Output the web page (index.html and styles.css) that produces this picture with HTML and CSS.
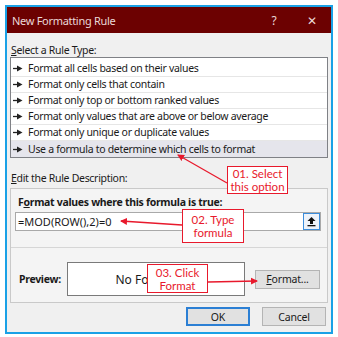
FILE: index.html
```html
<!DOCTYPE html>
<html>
<head>
<meta charset="utf-8">
<link rel="stylesheet" href="styles.css">
</head>
<body>
<div class="window">
  <div class="titlebar">
    <span class="title">New Formatting Rule</span>
    <span class="tb-help">?</span>
    <span class="tb-close">✕</span>
  </div>
  <div class="content">
    <div class="label"><u>S</u>elect a Rule Type:</div>
    <ul class="list">
      <li><svg class="arr" width="10" height="7" viewBox="0 0 10 7"><path d="M0 3.5H5" stroke="#222" stroke-width="1.3"/><path d="M4 0.5L9.5 3.5L4 6.5Z" fill="#222"/></svg>Format all cells based on their values</li>
      <li><svg class="arr" width="10" height="7" viewBox="0 0 10 7"><path d="M0 3.5H5" stroke="#222" stroke-width="1.3"/><path d="M4 0.5L9.5 3.5L4 6.5Z" fill="#222"/></svg>Format only cells that contain</li>
      <li><svg class="arr" width="10" height="7" viewBox="0 0 10 7"><path d="M0 3.5H5" stroke="#222" stroke-width="1.3"/><path d="M4 0.5L9.5 3.5L4 6.5Z" fill="#222"/></svg>Format only top or bottom ranked values</li>
      <li><svg class="arr" width="10" height="7" viewBox="0 0 10 7"><path d="M0 3.5H5" stroke="#222" stroke-width="1.3"/><path d="M4 0.5L9.5 3.5L4 6.5Z" fill="#222"/></svg>Format only values that are above or below average</li>
      <li><svg class="arr" width="10" height="7" viewBox="0 0 10 7"><path d="M0 3.5H5" stroke="#222" stroke-width="1.3"/><path d="M4 0.5L9.5 3.5L4 6.5Z" fill="#222"/></svg>Format only unique or duplicate values</li>
      <li class="selected"><svg class="arr" width="10" height="7" viewBox="0 0 10 7"><path d="M0 3.5H5" stroke="#222" stroke-width="1.3"/><path d="M4 0.5L9.5 3.5L4 6.5Z" fill="#222"/></svg>Use a formula to determine which cells to format</li>
    </ul>
    <div class="label label2"><u>E</u>dit the Rule Description:</div>
    <div class="group">
      <div class="bold-label">F<u>o</u>rmat values where this formula is true:</div>
      <div class="input">
        <span class="formula">=MOD(ROW(),2)=0</span>
        <span class="collapse"><svg width="11" height="11" viewBox="0 0 11 11"><path d="M5.5 1L1.5 5H4V8H7V5H9.5Z" fill="#111"/><rect x="1.5" y="9" width="8" height="1.3" fill="#111"/></svg></span>
      </div>
      <div class="sep"></div>
      <div class="preview-row">
        <span class="bold-label prev-label">Preview:</span>
        <div class="preview">No Format Set</div>
        <button class="btn format-btn"><u>F</u>ormat...</button>
      </div>
    </div>
    <div class="buttons">
      <button class="btn ok">OK</button>
      <button class="btn">Cancel</button>
    </div>
  </div>

  <svg class="arrows" width="328" height="329" viewBox="5 5 328 329">
    <defs>
      <marker id="ah" markerWidth="8" markerHeight="8" refX="6" refY="4" orient="auto" markerUnits="userSpaceOnUse">
        <path d="M0 0.5L7 4L0 7.5Z" fill="#e8192c"/>
      </marker>
    </defs>
    <line x1="227" y1="183" x2="178" y2="155" stroke="#e8192c" stroke-width="1.3" marker-end="url(#ah)"/>
    <line x1="182" y1="225" x2="121" y2="221" stroke="#e8192c" stroke-width="1.3" marker-end="url(#ah)"/>
    <line x1="208" y1="282" x2="257" y2="281" stroke="#e8192c" stroke-width="1.3" marker-end="url(#ah)"/>
  </svg>
  <div class="callout c1">01. Select<br>this option</div>
  <div class="callout c2">02. Type<br>formula</div>
  <div class="callout c3">03. Click<br>Format</div>
</div>
</body>
</html>
```
FILE: styles.css
```css
* { box-sizing: border-box; }
body {
  margin: 0;
  background: #ffffff;
  font-family: "Noto Sans", "Open Sans", sans-serif;
  font-size: 10.5px;
  letter-spacing: -0.3px;
  color: #1a1a1a;
}
.window {
  position: relative;
  margin: 5px 0 0 5px;
  width: 328px;
  height: 329px;
  border: 2px solid #1aa1e6;
  background: #f0f0f0;
  display: flex;
  flex-direction: column;
}
.titlebar {
  height: 26px;
  background: #6c0101;
  color: #ead8d8;
  display: flex;
  align-items: center;
  padding-left: 5px;
  font-size: 11px;
}
.title { flex: 1; }
.tb-help { width: 38px; text-align: center; font-size: 12px; }
.tb-close { width: 38px; text-align: center; font-size: 12px; }
.content {
  flex: 1;
  padding: 10px 3px 0 3px;
  display: flex;
  flex-direction: column;
}
.label {
  padding-left: 1px;
  line-height: 14px;
  height: 14px;
}
.label u, .bold-label u, .btn u { text-decoration: underline; }
.list {
  list-style: none;
  margin: 0;
  padding: 3px 0 0 0;
  border: 1px solid #7f8186;
  background: #ffffff;
  height: 101px;
}
.list li {
  height: 16px;
  line-height: 15px;
  border-bottom: 1px solid #e6e6e6;
  padding-left: 2px;
  display: flex;
  align-items: center;
  white-space: nowrap;
}
.list li.selected { background: #e5e5ec; border-bottom: none; }
.arr { margin-right: 5px; flex: none; }
.label2 { margin-top: 13px; }
.group {
  margin-top: 3px;
  border: 1px solid #c9c9c9;
  background: #f4f4f4;
  height: 115px;
  padding: 6px 6px 0 4px;
  display: flex;
  flex-direction: column;
}
.bold-label {
  font-weight: bold;
  line-height: 14px;
  padding-left: 3px;
}
.input {
  margin-top: 3px;
  height: 19px;
  border: 1px solid #a9a9a9;
  background: #ffffff;
  display: flex;
  align-items: center;
  justify-content: space-between;
  padding: 0 0 0 2px;
}
.formula { font-size: 11px; letter-spacing: 0; }
.collapse {
  width: 17px;
  height: 17px;
  border: 1px solid #3c8ddb;
  background: #eef3fa;
  display: flex;
  align-items: center;
  justify-content: center;
}
.sep {
  margin: 16px -6px 0 -4px;
  border-top: 1px solid #d6d6d6;
}
.preview-row {
  display: flex;
  align-items: center;
  margin-top: 14px;
}
.prev-label { width: 52px; padding-left: 4px; }
.preview {
  width: 178px;
  height: 34px;
  border: 1px solid #7a7a7a;
  background: #ffffff;
  display: flex;
  align-items: center;
  justify-content: center;
  font-size: 12px;
  letter-spacing: 0;
}
.btn {
  font-family: inherit;
  font-size: 10.5px;
  letter-spacing: -0.2px;
  color: #1a1a1a;
  height: 19px;
  width: 64px;
  border: 1px solid #b4b4b4;
  background: #e1e1e1;
  padding: 0;
}
.format-btn { margin-left: 10px; width: 65px; }
.buttons {
  display: flex;
  justify-content: flex-end;
  gap: 12px;
  padding: 4px 2px 0 0;
}
.btn.ok { border: 2px solid #2b7fd4; }
.arrows {
  position: absolute;
  left: -2px;
  top: -2px;
  pointer-events: none;
}
.callout {
  position: absolute;
  background: #ffffff;
  border: 1px solid #e8192c;
  color: #e8192c;
  text-align: center;
  font-family: "Lato", "Noto Sans", sans-serif;
  font-size: 11.5px;
  letter-spacing: 0;
  line-height: 13px;
  display: flex;
  align-items: center;
  justify-content: center;
}
.c1 { left: 220px; top: 159px; width: 61px; height: 28px; }
.c2 { left: 175px; top: 202px; width: 62px; height: 34px; }
.c3 { left: 140px; top: 257px; width: 61px; height: 29px; }
```
